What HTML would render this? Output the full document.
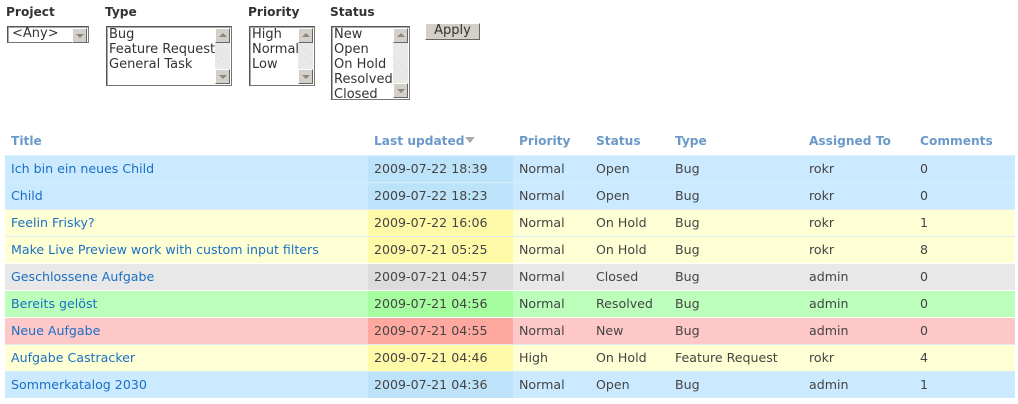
<!DOCTYPE html>
<html><head><meta charset="utf-8"><style>
*{margin:0;padding:0;box-sizing:border-box}
body{width:1018px;height:404px;background:#fff;font-family:"DejaVu Sans",Verdana,sans-serif;font-size:12.6px;color:#444;position:relative;overflow:hidden}
.lbl{position:absolute;top:5px;font-weight:bold;font-size:12.2px;color:#333}
.box{position:absolute;background:#fff;border:1px solid #777;border-top-color:#555;border-left-color:#555;box-shadow:inset 1px 1px 0 #aaa;font-size:13px;line-height:15px;color:#333}
.box .it{padding-left:2px;white-space:nowrap}
.sb{position:absolute;right:1px;top:1px;bottom:1px;width:15px;background:repeating-linear-gradient(45deg,#ddd 0 1px,#f4f4f4 1px 2px)}
.ar{position:absolute;left:0;width:15px;height:15px;background:#d4d0c8;border:1px solid;border-color:#fff #666 #666 #fff}
.ar:after{content:"";position:absolute;left:3px;border-left:4px solid transparent;border-right:4px solid transparent}
.up:after{top:4px;border-bottom:4px solid #888}
.dn:after{top:5px;border-top:4px solid #888}
table{position:absolute;left:5px;top:129px;width:1010px;border-collapse:collapse}
th{text-align:left;color:#6b9ac8;font-weight:bold;font-size:12.2px;height:26px;padding:0 6px 2px;vertical-align:middle}
td{height:27px;padding:0 6px;border-top:1px solid #fff;white-space:nowrap}
td a{color:#1a6fc4;text-decoration:none}
tr.b td{background:#cceaff;border-top-color:#d8eefc}tr.b td.d{background:#bde3fb}
tr.y td{background:#ffffd5;border-top-color:#e0ecf0}tr.y td.d{background:#fffaa8}
tr.g td{background:#e8e8e8}tr.g td.d{background:#dcdcdc}
tr.gr td{background:#bbffbb}tr.gr td.d{background:#a5fda0}
tr.r td{background:#ffc8c8}tr.r td.d{background:#ffa8a0}
</style></head><body>
<div class="lbl" style="left:6px">Project</div>
<div class="lbl" style="left:105px">Type</div>
<div class="lbl" style="left:248px">Priority</div>
<div class="lbl" style="left:330px">Status</div>

<div class="box" style="left:7px;top:26px;width:82px;height:17px;line-height:14px"><div class="it" style="padding-left:4px;color:#333">&lt;Any&gt;</div><div class="ar dn" style="left:auto;right:1px;top:1px;background:#d4d0c8"></div></div>

<div class="box" style="left:106px;top:26px;width:126px;height:60px"><div class="it">Bug</div><div class="it">Feature Request</div><div class="it">General Task</div><div class="sb"><div class="ar up" style="top:0"></div><div class="ar dn" style="bottom:0"></div></div></div>

<div class="box" style="left:249px;top:26px;width:66px;height:60px"><div class="it">High</div><div class="it">Normal</div><div class="it">Low</div><div class="sb"><div class="ar up" style="top:0"></div><div class="ar dn" style="bottom:0"></div></div></div>

<div class="box" style="left:331px;top:26px;width:79px;height:74px"><div class="it">New</div><div class="it">Open</div><div class="it">On Hold</div><div class="it">Resolved</div><div class="it">Closed</div><div class="sb"><div class="ar up" style="top:0"></div><div class="ar dn" style="bottom:0"></div></div></div>

<div style="position:absolute;left:425px;top:23px;width:55px;height:17px;background:#d4d0c8;border:1px solid;border-color:#fff #666 #666 #fff;font-size:13px;line-height:14px;text-align:center;color:#333">Apply</div>

<table>
<colgroup><col style="width:363px"><col style="width:145px"><col style="width:77px"><col style="width:79px"><col style="width:134px"><col style="width:111px"><col></colgroup>
<tr><th>Title</th><th>Last updated<span style="display:inline-block;width:0;height:0;border-left:5px solid transparent;border-right:5px solid transparent;border-top:6px solid #aaa;margin-left:1px;vertical-align:2px"></span></th><th>Priority</th><th>Status</th><th>Type</th><th>Assigned To</th><th>Comments</th></tr>
<tr class="b"><td><a>Ich bin ein neues Child</a></td><td class="d">2009-07-22 18:39</td><td>Normal</td><td>Open</td><td>Bug</td><td>rokr</td><td>0</td></tr>
<tr class="b"><td><a>Child</a></td><td class="d">2009-07-22 18:23</td><td>Normal</td><td>Open</td><td>Bug</td><td>rokr</td><td>0</td></tr>
<tr class="y"><td><a>Feelin Frisky?</a></td><td class="d">2009-07-22 16:06</td><td>Normal</td><td>On Hold</td><td>Bug</td><td>rokr</td><td>1</td></tr>
<tr class="y"><td><a>Make Live Preview work with custom input filters</a></td><td class="d">2009-07-21 05:25</td><td>Normal</td><td>On Hold</td><td>Bug</td><td>rokr</td><td>8</td></tr>
<tr class="g"><td><a>Geschlossene Aufgabe</a></td><td class="d">2009-07-21 04:57</td><td>Normal</td><td>Closed</td><td>Bug</td><td>admin</td><td>0</td></tr>
<tr class="gr"><td><a>Bereits gelöst</a></td><td class="d">2009-07-21 04:56</td><td>Normal</td><td>Resolved</td><td>Bug</td><td>admin</td><td>0</td></tr>
<tr class="r"><td><a>Neue Aufgabe</a></td><td class="d">2009-07-21 04:55</td><td>Normal</td><td>New</td><td>Bug</td><td>admin</td><td>0</td></tr>
<tr class="y"><td><a>Aufgabe Castracker</a></td><td class="d">2009-07-21 04:46</td><td>High</td><td>On Hold</td><td>Feature Request</td><td>rokr</td><td>4</td></tr>
<tr class="b"><td><a>Sommerkatalog 2030</a></td><td class="d">2009-07-21 04:36</td><td>Normal</td><td>Open</td><td>Bug</td><td>admin</td><td>1</td></tr>
</table>
</body></html>
